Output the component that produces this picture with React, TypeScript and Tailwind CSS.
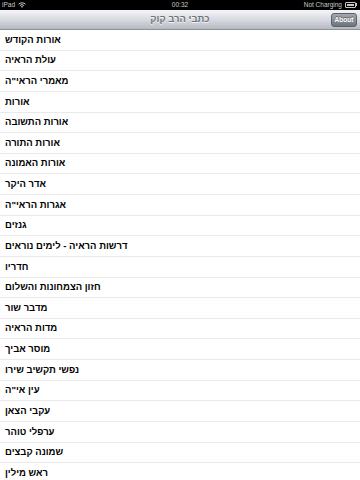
const books = [
  "אורות הקודש",
  "עולת הראיה",
  'מאמרי הראי"ה',
  "אורות",
  "אורות התשובה",
  "אורות התורה",
  "אורות האמונה",
  "אדר היקר",
  'אגרות הראי"ה',
  "גנזים",
  "דרשות הראיה - לימים נוראים",
  "חדריו",
  "חזון הצמחונות והשלום",
  "מדבר שור",
  "מדות הראיה",
  "מוסר אביך",
  "נפשי תקשיב שירו",
  'עין אי"ה',
  "עקבי הצאן",
  "ערפלי טוהר",
  "שמונה קבצים",
  "ראש מילין",
];

function Wifi() {
  return (
    <svg width="8" height="6" viewBox="0 0 16 12" className="ml-[3px]">
      <path d="M1 4.5 A10 10 0 0 1 15 4.5" stroke="#c8c8c8" strokeWidth="2" fill="none" />
      <path d="M3.8 7.2 A6 6 0 0 1 12.2 7.2" stroke="#c8c8c8" strokeWidth="2" fill="none" />
      <path d="M8 11.5 L5.8 9.4 A3 3 0 0 1 10.2 9.4 Z" fill="#c8c8c8" />
    </svg>
  );
}

function Battery() {
  return (
    <div className="ml-[3px] flex items-center">
      <div className="h-[6px] w-[11px] rounded-[1px] border border-[#c8c8c8] p-[1px]">
        <div className="h-full w-full bg-[#c8c8c8]" />
      </div>
      <div className="h-[3px] w-[1px] bg-[#c8c8c8]" />
    </div>
  );
}

export default function App() {
  return (
    <div className="h-[480px] w-[360px] overflow-hidden bg-white font-['Liberation_Sans',Arial,sans-serif]">
      {/* status bar */}
      <div className="relative flex h-[9.5px] items-center justify-between bg-black pl-[2px] pr-[3px] text-[6.5px] leading-none text-[#c8c8c8]">
        <div className="flex items-center">
          iPad
          <Wifi />
        </div>
        <div className="absolute left-1/2 -translate-x-1/2">00:32</div>
        <div className="flex items-center">
          Not Charging
          <Battery />
        </div>
      </div>

      {/* nav bar */}
      <div className="relative flex h-[20.5px] items-center justify-center border-b border-[#8d9297] bg-gradient-to-b from-[#f4f5f7] via-[#d8dbe0] to-[#b5bac2]">
        <div className="text-[9.5px] font-bold text-[#6c737c] [text-shadow:0_1px_0_rgba(255,255,255,0.8)]">
          כתבי הרב קוק
        </div>
        <button className="absolute right-[3px] top-[3px] flex h-[14px] w-[26px] items-center justify-center rounded-[3px] border border-[#5e636a] bg-gradient-to-b from-[#a3a8ae] to-[#6f757d] text-[6.5px] font-bold text-white [text-shadow:0_-1px_0_rgba(0,0,0,0.4)]">
          About
        </button>
      </div>

      {/* list */}
      <ul>
        {books.map((b) => (
          <li
            key={b}
            className="flex h-[20.625px] items-center border-b border-[#e9e9e9] pl-[5px] text-[9.5px] font-bold text-black"
          >
            <span>{b}</span>
          </li>
        ))}
      </ul>
    </div>
  );
}
